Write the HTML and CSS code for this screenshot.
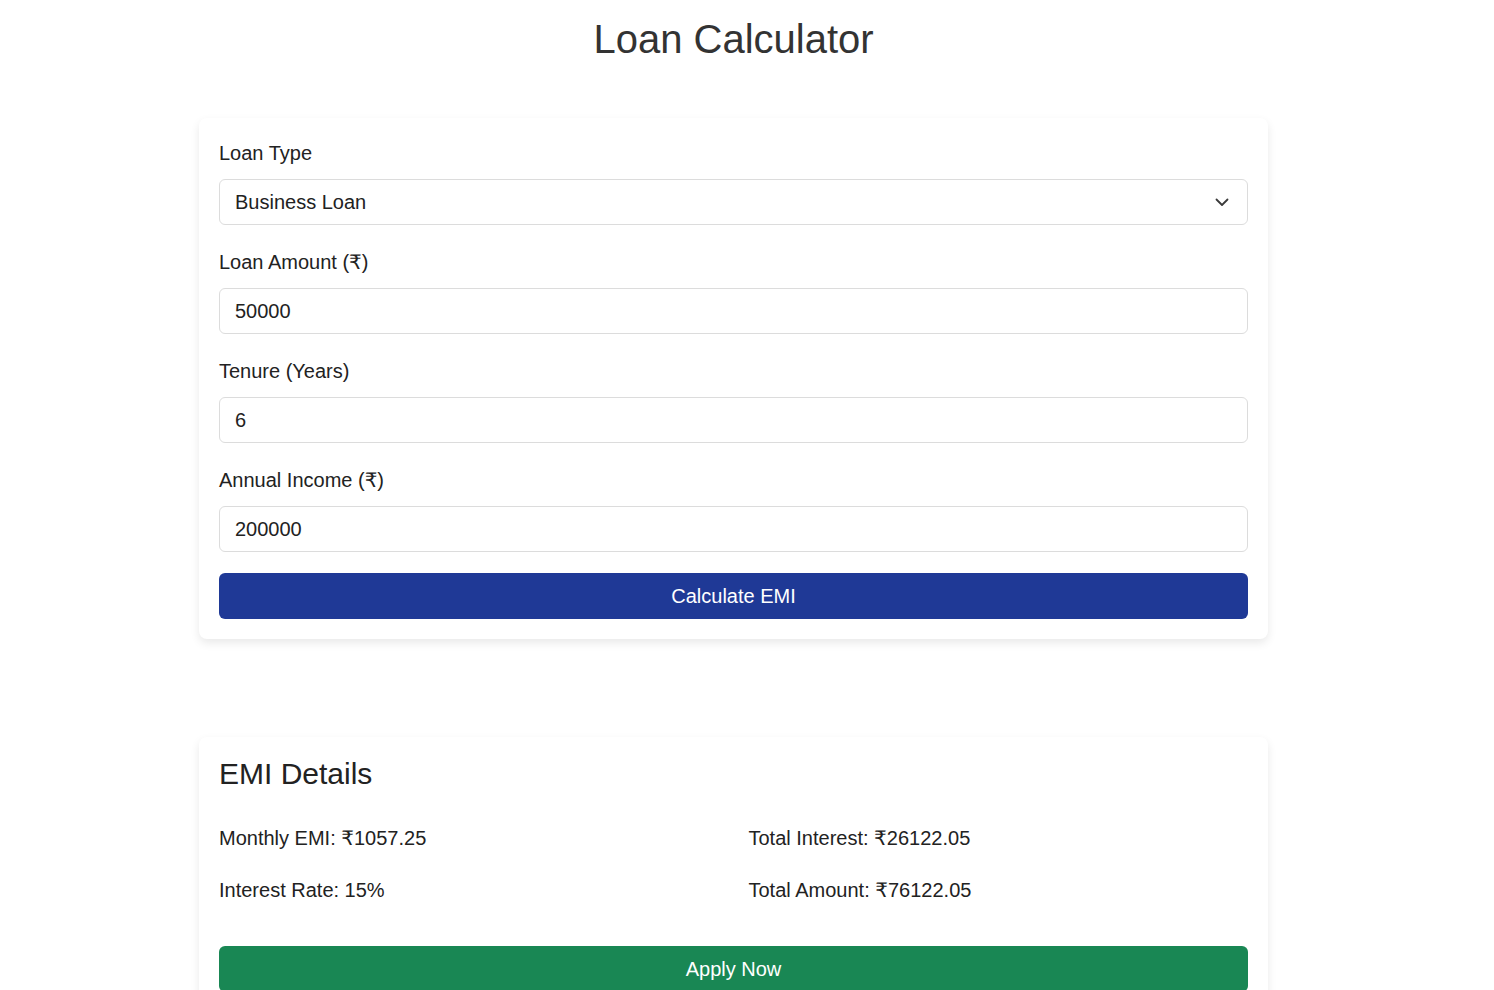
FILE: index.html
```html
<!DOCTYPE html>
<html lang="en">
<head>
<meta charset="utf-8">
<title>Loan Calculator</title>
<link rel="stylesheet" href="styles.css">
</head>
<body>
<div class="page">
  <h1 class="title">Loan Calculator</h1>

  <form class="card calc">
    <div class="field">
      <label class="label">Loan Type</label>
      <div class="select">
        <span class="select-value">Business Loan</span>
        <svg class="chevron" width="14" height="9" viewBox="0 0 14 9"><path d="M1.5 1.5 L7 7 L12.5 1.5" fill="none" stroke="#3a3a3a" stroke-width="1.8" stroke-linecap="round" stroke-linejoin="round"/></svg>
      </div>
    </div>
    <div class="field">
      <label class="label">Loan Amount (₹)</label>
      <div class="input">50000</div>
    </div>
    <div class="field">
      <label class="label">Tenure (Years)</label>
      <div class="input">6</div>
    </div>
    <div class="field">
      <label class="label">Annual Income (₹)</label>
      <div class="input">200000</div>
    </div>
    <button type="button" class="btn btn-blue">Calculate EMI</button>
  </form>

  <section class="card details">
    <h2 class="details-title">EMI Details</h2>
    <div class="grid">
      <p class="stat">Monthly EMI: ₹1057.25</p>
      <p class="stat">Total Interest: ₹26122.05</p>
      <p class="stat">Interest Rate: 15%</p>
      <p class="stat">Total Amount: ₹76122.05</p>
    </div>
    <button type="button" class="btn btn-green">Apply Now</button>
  </section>
</div>
</body>
</html>
```

FILE: styles.css
```css
* { box-sizing: border-box; }

html, body {
  margin: 0;
  padding: 0;
  background: #ffffff;
}

body {
  font-family: "Liberation Sans", Arial, "DejaVu Sans", sans-serif;
  color: #222222;
  overflow: hidden;
}

.page {
  width: 1069px;
  margin-left: 199px;
}

.title {
  margin: 15px 0 55px;
  font-size: 40px;
  line-height: 48px;
  font-weight: 400;
  color: #333333;
  text-align: center;
}

.card {
  background: #ffffff;
  border-radius: 8px;
  padding: 20px;
  box-shadow: 0 4px 10px rgba(0, 0, 0, 0.09);
}

.calc {
  display: flex;
  flex-direction: column;
}

.field + .field {
  margin-top: 22px;
}

.label {
  display: block;
  font-size: 20px;
  line-height: 30px;
  margin-bottom: 11px;
  color: #222222;
}

.input,
.select {
  height: 46px;
  border: 1px solid #dcdcdc;
  border-radius: 6px;
  padding: 0 15px;
  font-size: 20px;
  line-height: 44px;
  color: #222222;
  background: #ffffff;
}

.select {
  display: flex;
  align-items: center;
  justify-content: space-between;
  padding-right: 18px;
}

.chevron {
  display: block;
}

.btn {
  display: block;
  width: 100%;
  height: 46px;
  border: none;
  border-radius: 6px;
  font-family: inherit;
  font-size: 20px;
  color: #ffffff;
  padding: 0;
}

.btn-blue {
  margin-top: 21px;
  background: #1f3996;
}

.btn-green {
  margin-top: 41px;
  background: #198754;
}

.details {
  margin-top: 98px;
}

.details-title {
  margin: 0 0 33px;
  font-size: 30px;
  line-height: 33px;
  font-weight: 400;
  color: #222222;
}

.grid {
  display: grid;
  grid-template-columns: 1fr 1fr;
  column-gap: 30px;
  row-gap: 22px;
}

.stat {
  margin: 0;
  font-size: 20px;
  line-height: 30px;
  color: #222222;
}
```
